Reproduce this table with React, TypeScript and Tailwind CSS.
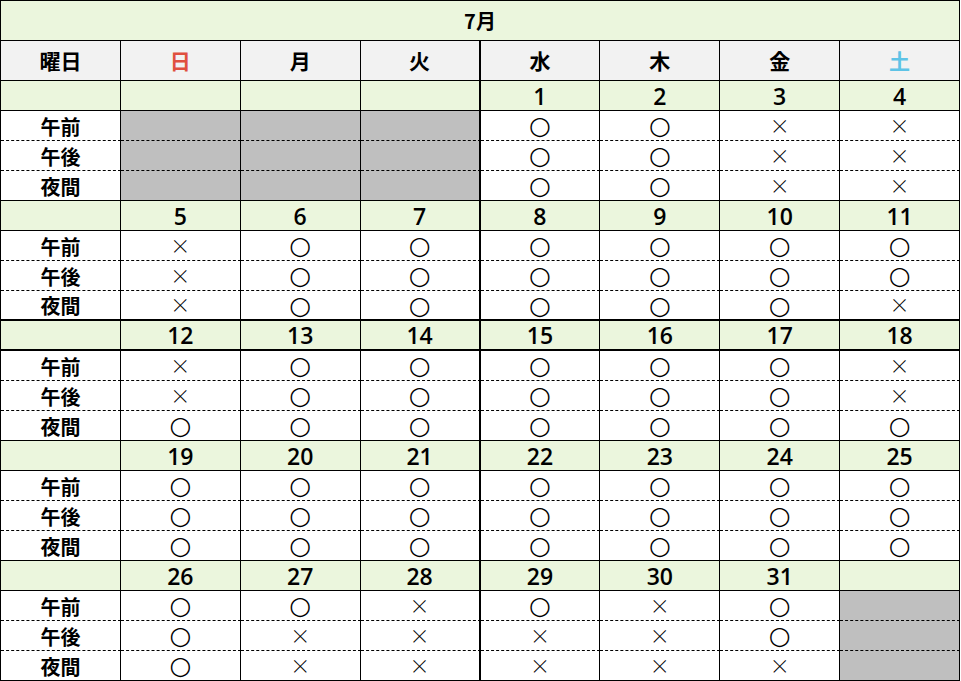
import React from "react";

type Mark = "o" | "x" | "g";

const weeks: { dates: (number | null)[]; slots: Mark[][] }[] = [
  {
    dates: [null, null, null, 1, 2, 3, 4],
    slots: [
      ["g", "g", "g", "o", "o", "x", "x"],
      ["g", "g", "g", "o", "o", "x", "x"],
      ["g", "g", "g", "o", "o", "x", "x"],
    ],
  },
  {
    dates: [5, 6, 7, 8, 9, 10, 11],
    slots: [
      ["x", "o", "o", "o", "o", "o", "o"],
      ["x", "o", "o", "o", "o", "o", "o"],
      ["x", "o", "o", "o", "o", "o", "x"],
    ],
  },
  {
    dates: [12, 13, 14, 15, 16, 17, 18],
    slots: [
      ["x", "o", "o", "o", "o", "o", "x"],
      ["x", "o", "o", "o", "o", "o", "x"],
      ["o", "o", "o", "o", "o", "o", "o"],
    ],
  },
  {
    dates: [19, 20, 21, 22, 23, 24, 25],
    slots: [
      ["o", "o", "o", "o", "o", "o", "o"],
      ["o", "o", "o", "o", "o", "o", "o"],
      ["o", "o", "o", "o", "o", "o", "o"],
    ],
  },
  {
    dates: [26, 27, 28, 29, 30, 31, null],
    slots: [
      ["o", "o", "x", "o", "x", "o", "g"],
      ["o", "x", "x", "x", "x", "o", "g"],
      ["o", "x", "x", "x", "x", "x", "g"],
    ],
  },
];

const slotLabels = ["午前", "午後", "夜間"];
const dayNames = ["日", "月", "火", "水", "木", "金", "土"];

const font = "font-['Noto_Sans_CJK_JP','Noto_Sans',sans-serif]";

function cellBorderR(i: number) {
  return i === 2 ? "border-r-2" : "border-r";
}

export default function App() {
  return (
    <div className={`w-[961px] h-[681px] bg-white text-black ${font}`}>
      <div className="w-[960px] border-l border-t border-black">
        {/* Title */}
        <div className="h-[40px] bg-[#ebf6dd] border-r border-b border-black flex items-center justify-center text-[20px] font-semibold leading-none">
          7月
        </div>
        {/* Header */}
        <div className="flex h-[40px]">
          <div className="w-[120px] bg-[#f2f2f2] border-r border-b border-black flex items-center justify-center text-[21px] font-semibold leading-none">
            曜日
          </div>
          {dayNames.map((d, i) => (
            <div
              key={d}
              className={`w-[120px] bg-[#f2f2f2] ${cellBorderR(i)} border-b border-black flex items-center justify-center text-[21px] font-semibold leading-none ${
                i === 0 ? "text-[#e0503f]" : i === 6 ? "text-[#5ec3e6]" : "text-black"
              }`}
            >
              {d}
            </div>
          ))}
        </div>
        {weeks.map((w, wi) => {
          const thickTop = wi === 2;
          return (
            <div key={wi}>
              <div className="flex h-[30px]">
                <div
                  className={`w-[120px] bg-[#ebf6dd] border-r ${thickTop ? "border-b-2" : "border-b"} border-black`}
                />
                {w.dates.map((d, i) => (
                  <div
                    key={i}
                    className={`w-[120px] bg-[#ebf6dd] ${cellBorderR(i)} ${thickTop ? "border-b-2" : "border-b"} border-black flex items-end justify-center pb-[2px] font-['Open_Sans','Noto_Sans',sans-serif] text-[23px] font-semibold leading-none`}
                  >
                    {d ?? ""}
                  </div>
                ))}
              </div>
              {w.slots.map((row, si) => {
                const last = si === 2;
                const bottom = last
                  ? wi === 1
                    ? "border-b-2 border-b-black"
                    : "border-b border-b-black"
                  : "border-b border-dashed border-b-black";
                return (
                  <div key={si} className="flex h-[30px]">
                    <div
                      className={`w-[120px] bg-white border-r border-r-black ${bottom} [border-right-style:solid] flex items-center justify-center pt-[2px] text-[20px] font-semibold leading-none`}
                    >
                      {slotLabels[si]}
                    </div>
                    {row.map((m, i) => (
                      <div
                        key={i}
                        className={`w-[120px] ${m === "g" ? "bg-[#bfbfbf]" : "bg-white"} ${cellBorderR(i)} border-r-black [border-right-style:solid] ${bottom} flex items-center justify-center font-normal leading-none`}
                      >
                        {m === "o" ? (
                          <span className="font-['DejaVu_Sans',sans-serif] text-[25px] leading-none">○</span>
                        ) : m === "x" ? (
                          <span className="text-[20px] font-light leading-none">×</span>
                        ) : (
                          ""
                        )}
                      </div>
                    ))}
                  </div>
                );
              })}
            </div>
          );
        })}
      </div>
    </div>
  );
}
